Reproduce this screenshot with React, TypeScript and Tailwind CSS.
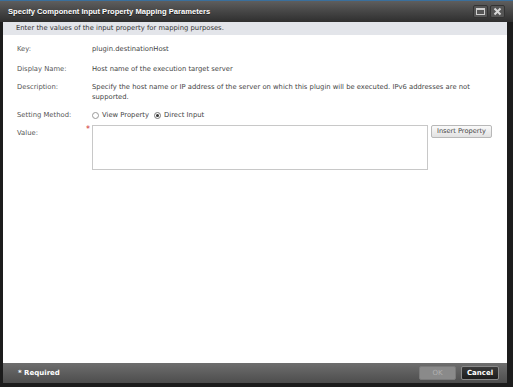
import React from "react";

const rows = [
  { label: "Key:", value: "plugin.destinationHost" },
  { label: "Display Name:", value: "Host name of the execution target server" },
];

export default function App() {
  const font = { fontFamily: "Tahoma, 'DejaVu Sans', sans-serif" };
  return (
    <div className="w-[515px] h-[387px] bg-white" style={font}>
      <div className="w-[513px] h-[387px] flex flex-col bg-[#1c1c1c] pl-[3px] pr-[6px] pb-[4px]">
        {/* Title bar */}
        <div className="h-[22px] shrink-0 -ml-[3px] -mr-[6px] pl-[8px] pr-[8px] flex items-center justify-between border-t border-[#3a6f9c] bg-gradient-to-b from-[#5e5e5e] to-[#2f2f2f]">
          <span className="text-white font-bold text-[7.6px] font-['Liberation_Sans',Arial,sans-serif] [text-shadow:0_1px_0_#222]">
            Specify Component Input Property Mapping Parameters
          </span>
          <div className="flex gap-[2px]">
            <div className="w-[15px] h-[13px] rounded-[2px] bg-[#555] border border-[#333] flex items-center justify-center">
              <div className="w-[9px] h-[7px] border border-[#cfcfcf] border-t-2" />
            </div>
            <div className="w-[15px] h-[13px] rounded-[2px] bg-[#555] border border-[#333] flex items-center justify-center">
              <svg width="9" height="9" viewBox="0 0 9 9">
                <path d="M1.5 1.5 L7.5 7.5 M7.5 1.5 L1.5 7.5" stroke="#d8d8d8" strokeWidth="2" />
              </svg>
            </div>
          </div>
        </div>

        {/* Subheader */}
        <div className="h-[13px] shrink-0 bg-[#e3e5ea] pl-[13px] flex items-center text-[6.8px] text-[#333]">
          Enter the values of the input property for mapping purposes.
        </div>

        {/* Body */}
        <div className="flex-1 bg-white pl-[14px] pt-[4px] text-[6.8px] text-[#444]">
          {rows.map((r) => (
            <div key={r.label} className="flex h-[20px] items-center">
              <span className="w-[75px] text-[#555]">{r.label}</span>
              <span>{r.value}</span>
            </div>
          ))}
          <div className="flex pt-[3px]">
            <span className="w-[75px] text-[#555]">Description:</span>
            <span className="w-[405px] leading-[10px]">
              Specify the host name or IP address of the server on which this plugin will be executed. IPv6 addresses are not
              supported.
            </span>
          </div>
          <div className="flex h-[20px] items-center mt-[3px]">
            <span className="w-[75px] text-[#555]">Setting Method:</span>
            <label className="flex items-center gap-[3px]">
              <span className="w-[7px] h-[7px] rounded-full border border-[#999] bg-white" />
              View Property
            </label>
            <label className="flex items-center gap-[3px] ml-[5px]">
              <span className="w-[7px] h-[7px] rounded-full border border-[#777] bg-white flex items-center justify-center">
                <span className="w-[3px] h-[3px] rounded-full bg-[#333]" />
              </span>
              Direct Input
            </label>
          </div>
          <div className="flex">
            <span className="w-[69px] text-[#555] pt-[3px]">Value:</span>
            <span className="w-[6px] text-[#d03030] text-[8px] leading-[10px]">*</span>
            <div className="w-[336px] h-[45px] border border-[#c8c8c8] bg-white" />
            <button className="ml-[3px] h-[13px] px-[5px] rounded-[2px] border border-[#b8b8b8] bg-gradient-to-b from-[#fafafa] to-[#e2e2e2] text-[6.6px] text-[#444]">
              Insert Property
            </button>
          </div>
        </div>

        {/* Footer */}
        <div className="h-[20px] shrink-0 bg-gradient-to-b from-[#6e6e6e] to-[#4d4d4d] flex items-center justify-between pl-[15px] pr-[8px]">
          <span className="text-white font-bold text-[7px]">* Required</span>
          <div className="flex gap-[5px]">
            <button className="w-[37px] h-[14px] rounded-[2px] bg-[#8a8a8a] border border-[#7a7a7a] text-[#b0b0b0] text-[7px]">OK</button>
            <button className="w-[38px] h-[14px] rounded-[2px] bg-gradient-to-b from-[#3a3a3a] to-[#1c1c1c] border border-[#888] text-white font-bold text-[7px]">
              Cancel
            </button>
          </div>
        </div>
      </div>
    </div>
  );
}
